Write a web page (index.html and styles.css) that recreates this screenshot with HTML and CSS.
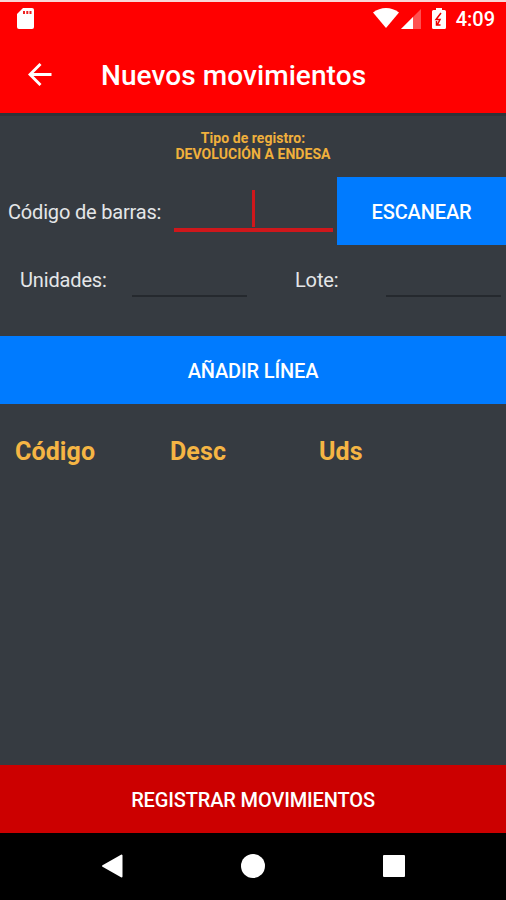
FILE: index.html
```html
<!DOCTYPE html>
<html lang="es">
<head>
  <meta charset="UTF-8" />
  <meta name="viewport" content="width=device-width, initial-scale=1.0" />
  <title>Nuevos movimientos</title>
  <link rel="stylesheet" href="styles.css">
</head>
<body>
  <header class="top">
    <div class="status-bar">
      <svg class="sd" width="17" height="21" viewBox="0 0 17 21">
        <path d="M6 0h9a2 2 0 0 1 2 2v17a2 2 0 0 1-2 2H2a2 2 0 0 1-2-2V6z" fill="#fff"/>
        <path d="M6 3h2v3H6zM9.300 3h2v3h-2zM12.500 3h2v3h-2z" fill="#e22"/>
      </svg>
      <svg class="wifi" width="26" height="20" viewBox="0 0 26 20">
        <path d="M0 4.500C7.500-1.500 18.500-1.500 26 4.500L13 20z" fill="#fff"/>
      </svg>
      <svg class="signal" width="20" height="20" viewBox="0 0 20 20">
        <path d="M20 0v20H0z" fill="#ff5050"/>
        <path d="M12 8v12H0z" fill="#fff"/>
      </svg>
      <svg class="battery" width="14" height="21" viewBox="0 0 14 21">
        <path d="M4 0h6v2h2.500A1.500 1.500 0 0 1 14 3.500v16a1.500 1.500 0 0 1-1.500 1.500h-11A1.500 1.500 0 0 1 0 19.500v-16A1.500 1.500 0 0 1 1.500 2H4z" fill="#fff"/>
        <path d="M9 5L4 11.500h4L5.500 16.500M4.500 13v4h4" fill="none" stroke="#e00" stroke-width="1.500"/>
      </svg>
      <span class="clock">4:09</span>
    </div>
    <div class="app-bar">
      <svg class="back" width="24" height="23" viewBox="0 0 24 23">
        <path d="M23.500 11.500H2M12.500 1L2 11.500 12.500 22" fill="none" stroke="#fff" stroke-width="2.900"/>
      </svg>
      <h1>Nuevos movimientos</h1>
    </div>
  </header>

  <main class="content">
    <p class="type">Tipo de registro:<br>DEVOLUCIÓN A ENDESA</p>
    <div class="row barcode">
      <label>Código de barras:</label>
      <div class="field active"><span class="caret"></span></div>
      <button class="scan">ESCANEAR</button>
    </div>
    <div class="row amounts">
      <label class="units">Unidades:</label>
      <div class="field"></div>
      <label class="lot">Lote:</label>
      <div class="field"></div>
    </div>
    <button class="add">AÑADIR LÍNEA</button>
    <div class="table-head">
      <span>Código</span>
      <span>Desc</span>
      <span>Uds</span>
    </div>
  </main>

  <button class="register">REGISTRAR MOVIMIENTOS</button>

  <nav class="nav-bar">
    <svg width="24" height="24" viewBox="0 0 24 24"><path d="M21.500 1.500v21L3 12z" fill="#fff" stroke="#fff" stroke-width="2" stroke-linejoin="round"/></svg>
    <svg width="24" height="24" viewBox="0 0 24 24"><circle cx="12" cy="12" r="12" fill="#fff"/></svg>
    <svg width="24" height="24" viewBox="0 0 24 24"><rect x="1" y="1" width="22" height="22" rx="1" fill="#fff"/></svg>
  </nav>
</body>
</html>
```
FILE: styles.css
```css
* {
  box-sizing: border-box;
}
body {
  display: flex;
  flex-direction: column;
  height: 900px;
  margin: 0;
  font-family: Roboto, "Liberation Sans", sans-serif;
  font-size: 20px;
  background-color: #363b41;
  color: #e4e6e8;
}
.top {
  height: 113px;
  border-top: 2px solid #f8d8d8;
  background-color: #ff0000;
  color: #fff;
}
.status-bar {
  display: flex;
  align-items: center;
  height: 35px;
  padding: 0 11px 0 17px;
}
.sd {
  margin: -3px auto 0 0;
}
.wifi {
  margin: -3px 2px 0 0;
}
.signal {
  margin: -2px 11px 0 0;
}
.battery {
  margin: -3px 10px 0 0;
}
.clock {
  font-weight: 500;
  line-height: 35px;
}
.app-bar {
  display: flex;
  align-items: center;
  height: 74px;
  padding-left: 28px;
}
h1 {
  margin: 4px 0 0 49px;
  font-size: 28px;
  font-weight: 500;
  line-height: 36px;
  letter-spacing: 0.08px;
}
.content {
  flex: 1;
  border-top: 3px solid #2e3339;
}
.type {
  margin: 14px 0;
  font-size: 14px;
  font-weight: 700;
  line-height: 16px;
  letter-spacing: 0.05px;
  text-align: center;
  color: #f0b03c;
}
.row {
  display: flex;
}
.barcode {
  align-items: center;
  height: 68px;
  margin-top: 15px;
}
.barcode label {
  width: 174px;
  padding: 2px 0 0 8px;
  letter-spacing: -0.18px;
}
.field {
  width: 115px;
  height: 32px;
  border-bottom: 2px solid #25292e;
}
.field.active {
  display: flex;
  justify-content: center;
  width: 159px;
  height: 42px;
  border-bottom: 4px solid #cf171b;
}
.caret {
  width: 3px;
  height: 37px;
  background-color: #cf171b;
}
button {
  height: 68px;
  padding: 2px 0 0;
  border: none;
  font-family: inherit;
  font-size: 20px;
  font-weight: 500;
  letter-spacing: -0.14px;
  color: #fff;
  background-color: #007bff;
}
.scan {
  flex: 1;
  margin-left: 4px;
}
.amounts {
  height: 91px;
  padding-top: 20px;
}
.amounts label {
  line-height: 31px;
  letter-spacing: -0.15px;
}
.units {
  width: 132px;
  padding-left: 20px;
}
.lot {
  width: 139px;
  padding-left: 48px;
}
.add {
  display: block;
  width: 100%;
}
.table-head {
  display: flex;
  padding: 32px 0 0 15px;
  font-size: 25px;
  font-weight: 700;
  line-height: 32px;
  letter-spacing: 0.1px;
  color: #f5b544;
}
.table-head span {
  width: 155px;
}
.table-head span:nth-child(2) {
  width: 149px;
}
.register {
  background-color: #cc0000;
}
.nav-bar {
  display: flex;
  justify-content: center;
  align-items: center;
  gap: 117px;
  height: 67px;
  padding-bottom: 2px;
  background-color: #000;
}
```
